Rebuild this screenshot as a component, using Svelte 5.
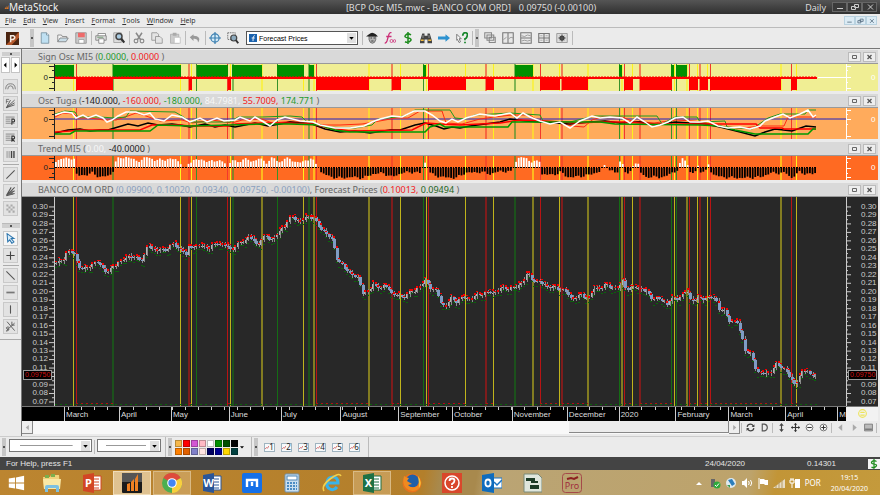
<script lang="ts">
    const menus = ['File', 'Edit', 'View', 'Insert', 'Format', 'Tools', 'Window', 'Help'];

    // inner markup of the 16x16 toolbar icons
    const icons: Record<string, string> = {
        new: '<path d="M3 1h7l3 3v11H3z" fill="#bfe0f2" stroke="#6c8797"/><path d="M10 1v3h3" fill="#fff" stroke="#6c8797"/>',
        open: '<path d="M1 13V4h5l1 2h6v2" fill="#f5f5f5" stroke="#777"/><path d="M1 13l3-5h11l-3 5z" fill="#c9dde8" stroke="#777"/>',
        save: '<path d="M1 1h14v14H1z" fill="#c9c9c9" stroke="#888"/><path d="M4 1h9v6H4z" fill="#ee6a6a"/><path d="M5 10h7v5H5z" fill="#fff" stroke="#999"/>',
        print: '<path d="M4 6V2h10v4" fill="#fff" stroke="#777"/><path d="M1 5h14v6H1z" fill="#ddd" stroke="#777"/><path d="M5 9h7v6H5z" fill="#fff" stroke="#777"/><path d="M3 7h8" stroke="#558a5a"/>',
        preview: '<path d="M1 1h10v13H1z" fill="#ddd" stroke="#999"/><circle cx="8" cy="6" r="4" fill="#a9cbe2" stroke="#444" stroke-width="2"/><path d="M11 9l4 5" stroke="#333" stroke-width="3"/>',
        cut: '<path d="M4 1l6 9M12 1L6 10" stroke="#888" stroke-width="2"/><circle cx="4" cy="12" r="2.5" fill="none" stroke="#888" stroke-width="1.5"/><circle cx="12" cy="12" r="2.5" fill="none" stroke="#888" stroke-width="1.5"/>',
        copy: '<path d="M1 1h7l2 2v8H1z" fill="#e4e4e4" stroke="#8a8a8a"/><path d="M6 6h6l3 3v6H6z" fill="#e4e4e4" stroke="#8a8a8a"/>',
        paste: '<path d="M2 3h11v12H2z" fill="#ccc" stroke="#aaa"/><path d="M5 1h5v4H5z" fill="#aaa"/><path d="M7 7h8v8H7z" fill="#fff" stroke="#bbb"/>',
        undo: '<path d="M6 3L1 7l5 5V9c4 0 6 1 6 5 4-5 1-9-6-9z" fill="#999"/>',
        target: '<circle cx="8" cy="8" r="5.5" fill="#d6ecf8" stroke="#3b7fb0" stroke-width="1.6"/><path d="M8 0v16M0 8h16" stroke="#3b7fb0" stroke-width="1.6"/>',
        zoomsel: '<path d="M1 1h10v9H1z" fill="none" stroke="#555" stroke-dasharray="2 1"/><circle cx="9" cy="8" r="4" fill="#8ba9bd" stroke="#444" stroke-width="1.6"/><path d="M12 11l3 4" stroke="#333" stroke-width="2.6"/>',
        expert: '<path d="M4 5h9v5q-1 5-4.500 5T4 10z" fill="#b3b3b3" stroke="#555"/><path d="M0 6l4-3q4-4 9 0l3 3z" fill="#222"/><path d="M6 8h2M10 8h2M7 12h3" stroke="#222"/>',
        fx: '<path d="M10 1Q7 0 6 5L4 12q-1 3-3 3M3 6h7" fill="none" stroke="#cc2f78" stroke-width="1.7"/><circle cx="10" cy="12" r="2" fill="none" stroke="#cc2f78"/><circle cx="14" cy="12" r="1.800" fill="none" stroke="#cc2f78"/>',
        dollar: '<path d="M12 4Q8 1 5 4t3 4 3 4-7 1M8 0v16" fill="none" stroke="#1d8c1d" stroke-width="2"/>',
        find: '<path d="M3 2h3v3h4V2h3l3 10v3h-6v-5H6v5H0v-3z" fill="#444"/><path d="M1 11h4M11 11h4" stroke="#f0b93c" stroke-width="2"/><path d="M4 4v4M12 4v4" stroke="#aaa"/>',
        arrow: '<path d="M0 6h10V3l6 5-6 5v-3H0z" fill="#2d92d0"/>',
        help: '<path d="M1 3l6 6H4l2 4-2 1-2-4-1 1z" fill="#fff" stroke="#555"/><path d="M9 5q0-4 3.500-4T15 5t-3 4v2M12 13v2" fill="none" stroke="#17862c" stroke-width="2.300"/>',
        cascade: '<path d="M1 1h9v7H1zM4 4h9v7H4zM7 7h8v7H7z" fill="#e8e8e8" stroke="#888" stroke-width="1.4"/>',
        tilev: '<path d="M1 1h14v14H1zM8 1v14" fill="#e8e8e8" stroke="#777" stroke-width="1.400"/><path d="M2 10l4-3M9 9l3-2 3 1" stroke="#888" fill="none"/>',
        tileh: '<path d="M1 1h14v14H1zM1 8h14" fill="#e8e8e8" stroke="#777" stroke-width="1.400"/><path d="M2 5l4 1 4-2 4 1M2 12l4-1 4 1 4-1" stroke="#888" fill="none"/>',
        grid: '<path d="M1 2h14v12H1zM8 2v12M1 8h14" fill="#e8e8e8" stroke="#777" stroke-width="1.500"/><path d="M3 5h3M10 5h3M3 11h3M10 11h3" stroke="#999"/>',
        gear: '<path d="M1 2h14v12H1z" fill="#ddd" stroke="#888"/><circle cx="8" cy="8" r="2.500" fill="none" stroke="#444" stroke-width="2"/><path d="M8 3v10M3 8h10M5 5l6 6M11 5l-6 6" stroke="#444"/>',
        arc: '<path d="M1 12Q1 4 8 4t7 8M4 12q0-5 4-5t4 5" fill="none" stroke="#777" stroke-width="1.300"/>',
        fan: '<path d="M2 14L14 3M2 14L8 3M2 14l12-4M2 14l12-7" stroke="#555" stroke-width="1.300"/><path d="M2 2h4M2 2v6M2 5h3" stroke="#555" fill="none"/>',
        fibp: '<path d="M1 3h13M1 6h7M1 9h7M1 12h13" stroke="#666"/><path d="M10 14V6h3q2 3 0 4h-3" fill="none" stroke="#333" stroke-width="1.500"/>',
        fibr: '<path d="M1 3h13M1 6h7M1 9h7M1 12h13" stroke="#666"/><path d="M10 14V6h3q2 3 0 4h-3l4 4" fill="none" stroke="#333" stroke-width="1.500"/>',
        bars: '<path d="M3 3v10M6 3v10" stroke="#777"/><path d="M9.500 3v10M13 3v10" stroke="#444" stroke-width="2"/>',
        slash: '<path d="M2 14L14 2" stroke="#555" stroke-width="1.500"/>',
        rays: '<path d="M2 14L14 2M2 14L9 2M2 14l12-7M2 14l12-3" stroke="#555" stroke-width="1.500"/><path d="M3 13l8-7v7z" fill="#666"/>',
        check: '<path d="M2 2h3v3H2zM8 2h3v3H8zM5 5h3v3H5zM11 5h3v3h-3zM2 8h3v3H2zM8 8h3v3H8zM5 11h3v3H5zM11 11h3v3h-3z" fill="#aaa"/>',
        pointer: '<path d="M3 1l10 7H9l4 5-3 2-3-5-3 3z" fill="#d9ecf8" stroke="#2e76ae" stroke-width="1.500"/>',
        plus: '<path d="M8 2v12M2 8h12" stroke="#444" stroke-width="1.600"/>',
        back: '<path d="M2 2l12 12" stroke="#555" stroke-width="1.500"/>',
        dash: '<path d="M2 8h12" stroke="#777" stroke-width="2.500"/>',
        pipe: '<path d="M8 2v12" stroke="#555" stroke-width="1.600"/>',
        sl: '<path d="M3 1l11 13M2 14L14 3M10 1v5h4M6 9Q2 8 2 10t3 2-3 3" fill="none" stroke="#555" stroke-width="1.300"/>',
        refresh: '<path d="M2 7q1-5 6-5 3 0 5 3M14 9q-1 5-6 5-3 0-5-3" fill="none" stroke="#444" stroke-width="2.200"/><path d="M15 2v5h-5zM1 14V9h5z" fill="#444"/>',
        day: '<path d="M4 2h4q5 1 5 6t-5 6H4z" fill="none" stroke="#555" stroke-width="2"/>',
        updown: '<path d="M8 0l4 5H9v6h3l-4 5-4-5h3V5H4z" fill="#444"/>',
        move: '<path d="M8 1v14M1 8h14" stroke="#333" stroke-width="2"/><path d="M8 0l3 3H5zM8 16l3-3H5zM0 8l3-3v6zM16 8l-3-3v6z" fill="#333"/>',
        minus: '<circle cx="8" cy="8" r="6" fill="#fff" stroke="#555" stroke-width="1.400"/><path d="M4 8h8" stroke="#333" stroke-width="2"/>',
        zoomin: '<circle cx="8" cy="8" r="6" fill="#fff" stroke="#555" stroke-width="1.400"/><path d="M4 8h8M8 4v8" stroke="#333" stroke-width="2"/>',
        left: '<path d="M11 2v12L4 8z" fill="#aaa"/>',
        right: '<path d="M5 2v12l7-6z" fill="#aaa"/>',
        sheet: '<path d="M1 2h14v12H1z" fill="#bbb" stroke="#777" stroke-width="1.500"/><path d="M2 11h12" stroke="#666" stroke-width="2"/>',
    };

    const toolGroups = [
        ['new', 'open', 'save'],
        ['print', 'preview'],
        ['cut', 'copy', 'paste'],
        ['undo'],
        ['target', 'zoomsel'],
    ];
    const helpTools = ['expert', 'fx', 'dollar', 'find', 'arrow', 'help'];
    const windowTools = ['cascade', 'tilev', 'tileh', 'grid', 'gear'];
    const lineTools = [
        ['arc', 'fan', 'fibp', 'fibr', 'bars'],
        ['slash', 'rays', 'check'],
    ];
    const drawTools = [
        ['pointer', 'plus'],
        ['back', 'dash', 'pipe', 'sl'],
    ];
    const scrollTools = [
        ['refresh', 'day'],
        ['updown', 'move', 'minus', 'zoomin'],
        ['left', 'right', 'sheet'],
    ];

    const swatches = [
        '#f5b84c', '#ff0000', '#d357d3', '#ffb9c4', '#ffffff', '#009000', '#005000', '#000000',
        '#ff8000', '#e06000', '#8080c8', '#ffe4e1', '#000060', '#000090', '#ffd700', '#004040',
    ];

    // signal lines: lower case is a thin line, upper case a wide dim one
    const signals: [number, string][] = [
        [73, 'y'], [76, 'r'], [112, 'G'], [180, 'y'], [188, 'R'], [191, 'y'], [196, 'g'], [227, 'r'],
        [230, 'y'], [232, 'G'], [261, 'Y'], [277, 'g'], [303, 'y'], [308, 'G'], [313, 'Y'], [316, 'r'],
        [368, 'Y'], [391, 'R'], [400, 'y'], [423, 'g'], [426, 'y'], [428, 'r'], [465, 'y'], [485, 'R'],
        [493, 'y'], [514, 'G'], [532, 'Y'], [540, 'r'], [559, 'y'], [561, 'R'], [587, 'Y'], [619, 'g'],
        [621, 'Y'], [624, 'r'], [632, 'y'], [639, 'R'], [671, 'g'], [674, 'y'], [676, 'g'], [686, 'Y'],
        [689, 'r'], [697, 'y'], [699, 'R'], [707, 'y'], [710, 'r'], [780, 'Y'], [791, 'r'], [796, 'y'],
    ];

    const buys = [
        [55, 74], [113, 181], [197, 228], [232, 262], [277, 304], [309, 314],
        [423, 426], [515, 533], [619, 622], [671, 674], [676, 687],
    ];
    const sells = [
        [76, 113], [189, 192], [228, 231], [316, 369], [392, 401], [428, 466], [486, 494], [540, 560],
        [562, 588], [624, 633], [640, 672], [689, 698], [700, 708], [710, 781], [791, 797],
    ];

    // trend histogram, positive is up
    const trend = [
        [55, 5], [60, 9], [65, 8], [70, 9], [74, 8], [75, 0], [76, -8], [84, -7], [92, -5], [98, -9], [108, -8],
        [112, -4], [113, 3], [118, 9], [126, 10], [134, 7], [140, 6], [147, 11], [154, 6], [160, 8], [168, 7],
        [174, 9], [178, 5], [183, 0], [186, 0], [188, 5], [200, 8], [207, 5], [216, 7], [224, 4], [227, 0],
        [231, 8], [237, 4], [243, 9], [251, 5], [258, 9], [265, 4], [272, 10], [278, 4], [284, 9], [291, 7],
        [298, 4], [304, 6], [310, 9], [314, 4], [317, 0], [321, -5], [330, -9], [340, -10], [352, -9],
        [362, -10], [372, -6], [382, -5], [391, -9], [401, -5], [410, -4], [420, -5], [422, 0], [425, 6],
        [427, 0], [430, -6], [440, -9], [455, -10], [464, -5], [480, -4], [490, -6], [500, -3], [511, -4],
        [513, 0], [516, 8], [520, 10], [526, 8], [532, 5], [539, 6], [541, -6], [552, -7], [560, -4],
        [566, -9], [574, -9], [588, -7], [600, -3], [602, 2], [606, 0], [611, -3], [616, -6], [618, 0],
        [620, 9], [623, 0], [626, -8], [630, -3], [633, 4], [637, 4], [639, -4], [645, -9], [664, -9],
        [672, -4], [678, -2], [680, 7], [683, 10], [686, 4], [690, -6], [696, -3], [698, 4], [700, -4],
        [706, -3], [708, 4], [711, -6], [720, -9], [740, -10], [760, -9], [770, -5], [785, -5], [791, -10],
        [798, -4], [806, -6], [812, -6], [817, -4],
    ];

    const price = [
        [55, 66], [62, 64], [64, 57], [70, 56], [74, 57], [77, 70], [82, 73], [90, 68], [98, 66], [104, 74],
        [108, 76], [112, 69], [120, 65], [128, 59], [135, 62], [142, 63], [146, 50], [155, 53], [163, 54],
        [172, 47], [176, 52], [182, 53], [185, 59], [188, 50], [198, 49], [208, 51], [218, 46], [226, 50],
        [230, 54], [234, 49], [241, 46], [248, 39], [256, 49], [262, 40], [270, 43], [278, 36], [283, 29],
        [290, 20], [296, 24], [303, 22], [312, 19], [317, 30], [325, 36], [331, 44], [336, 62], [344, 73], [352, 78],
        [358, 84], [361, 96], [368, 95], [372, 88], [380, 91], [387, 90], [392, 99], [402, 100], [412, 95],
        [420, 89], [425, 84], [430, 92], [436, 96], [440, 106], [444, 111], [450, 102], [456, 105],
        [462, 101], [470, 102], [480, 97], [492, 96], [500, 92], [515, 91], [521, 85], [526, 78], [532, 83],
        [540, 87], [550, 91], [561, 92], [570, 102], [580, 99], [588, 101], [592, 93], [605, 89], [618, 92],
        [622, 84], [626, 93], [635, 90], [644, 95], [652, 102], [663, 104], [666, 108], [670, 103],
        [680, 100], [686, 94], [690, 104], [700, 102], [714, 101], [718, 112], [724, 116], [728, 124],
        [736, 126], [741, 141], [745, 158], [748, 156], [752, 164], [756, 176], [762, 178], [770, 175],
        [776, 168], [784, 173], [790, 184], [794, 188], [800, 178], [806, 173], [810, 180], [817, 180],
    ];

    const oscLines = [
        { color: '#2020c0', width: 1, points: '55,11 846,11' },
        { color: '#ff2a12', width: 1, points: '55,9 63,5 74,6 78,10 90,10 104,12 116,12 128,8 136,5 146,8 160,13 182,12 192,15 212,12 232,15 242,12 262,11 272,15 296,13 310,15 324,17 340,17 362,16 374,14 396,10 408,10 420,3 442,3 446,15 462,16 480,11 494,9 512,7 530,7 540,14 560,15 572,18 584,19 592,12 602,9 622,9 632,13 654,15 676,12 692,13 702,14 722,19 744,20 760,18 784,18 788,9 816,9' },
        { color: '#1f9a1f', width: 1, points: '55,6 65,3 75,4 78,9 100,9 115,10 126,9 130,3 175,4 182,8 190,14 230,14 238,9 262,9 290,8 302,9 306,13 325,19 355,20 372,17 378,11 405,8 415,2 450,2 455,10 465,11 475,7 510,5 540,7 543,13 570,14 590,9 595,8 657,8 662,16 675,9 697,9 700,14 725,13 727,19 752,21 768,10 780,6 805,6 808,2 816,2' },
        { color: '#000000', width: 1.5, points: '55,25 68,22 80,21 90,23 100,22 108,22 118,19 128,16 138,18 148,15 158,17 172,16 180,17 190,19 205,16 215,19 225,17 235,19 245,17 255,15 268,18 280,16 290,14 312,16 325,21 340,24 355,23 370,25 390,22 400,22 415,17 425,15 436,18 444,21 452,19 460,20 470,18 485,16 500,14 510,11 525,13 540,14 555,15 570,16 590,14 605,13 620,15 640,14 655,17 675,14 690,15 705,16 720,19 740,24 755,28 765,24 775,21 792,23 806,18 816,19' },
        { color: '#ff0000', width: 1.5, points: '55,24 70,23 80,22 140,22 152,17 180,17 190,18 228,18 236,16 262,15 290,15 312,16 330,20 350,23 412,22 426,15 440,16 460,17 480,16 500,15 520,12 545,13 575,15 600,14 625,14 656,16 700,16 756,16 760,20 782,20 784,21 816,21' },
        { color: '#009a00', width: 1.5, points: '55,26 70,26 75,23 150,23 158,17 190,18 230,17 262,16 290,16 320,17 335,22 350,24 425,24 430,19 440,16 445,19 508,19 512,14 600,14 615,16 700,17 720,18 735,22 755,26 808,26 813,21 816,21' },
        { color: '#ffffff', width: 1.5, points: '55,7 64,4 72,5 76,10 83,7 88,10 96,7 103,10 107,14 112,12 118,8 126,4 136,4 144,7 150,5 155,11 164,13 172,7 182,9 190,14 200,10 207,14 217,10 224,13 235,12 240,9 250,13 255,9 262,13 270,18 277,12 285,9 300,13 313,14 320,17 335,20 350,20 364,18 372,14 380,11 392,8 402,9 414,3 425,3 432,7 440,13 446,15 452,11 458,14 466,10 480,6 495,8 510,5 517,10 523,5 530,9 540,13 550,16 560,14 570,20 580,13 592,8 600,10 610,9 622,10 630,15 637,9 645,14 652,19 660,17 668,14 675,10 683,9 690,14 700,14 708,13 718,18 728,20 740,19 750,21 760,18 765,13 775,9 783,6 790,10 800,6 808,2 813,9 816,7' },
    ];

    const months: [string, number][] = [
        ['March', 55], ['April', 52], ['May', 58], ['June', 52], ['July', 60], ['August', 58],
        ['September', 54], ['October', 60], ['November', 55], ['December', 52], ['2020', 57],
        ['February', 53], ['March', 57], ['April', 52], ['M', 7],
    ];
    const weeks = Array.from({ length: 60 }, (_, i) => Math.round(67.7 + i * 13.04));
    const lastPrice = '0.09750';
    const priceLabels = Array.from({ length: 24 }, (_, i) => (0.3 - i * 0.01).toFixed(2));
    const priceTicks = Array.from({ length: 47 }, (_, i) => ({ y: 10 + i * 4.26, major: i % 2 === 0 }));

    // the price tag takes the place of the label nearest to the last price
    const tagLabel = Number(lastPrice).toFixed(2);

    function valueAt(points: number[][], x: number) {
        for (let i = 1; i < points.length; i++) {
            const [x0, y0] = points[i - 1];
            const [x1, y1] = points[i];
            if (x <= x1) return y0 + ((y1 - y0) * (x - x0)) / (x1 - x0);
        }
        return points[points.length - 1][1];
    }

    const noise = (i: number) => Math.sin(i * 12.9) * Math.cos(i * 4.7);

    const days = Array.from({ length: 293 }, (_, i) => 55 + i * 2.6);

    const trendBars = days.map((x, i) => {
        const v = valueAt(trend, x);
        return { x, v: Math.abs(v) < 1 ? 0 : v + noise(i) * 1.5 };
    });

    const candles = days.map((x, i) => {
        const open = valueAt(price, Math.max(x - 2.6, 55)) + noise(i) * 2;
        const close = valueAt(price, x) + noise(i + 1) * 2;
        const top = Math.min(open, close);
        return { x, top, height: Math.max(Math.abs(close - open), 1), down: close > open + 1, wick: 1 + Math.abs(noise(i + 3)) * 2 };
    });

    const taskApps = ['explorer', 'powerpoint', 'metastock', 'chrome', 'word', 'maxthon', 'calculator', 'ie', 'excel', 'firefox', 'support', 'outlook', 'broker', 'pro'];
    const openApps = ['chrome', 'excel'];
</script>

{#snippet icon(name: string)}
    <svg class="icon" viewBox="0 0 16 16" fill="none">{@html icons[name]}</svg>
{/snippet}

{#snippet office(letter: string, color: string)}
    <svg viewBox="0 0 20 20">
        <path d="M10 3h9v14h-9z" fill="#fff" stroke={color} />
        <path d="M11 6h6M11 9h6M11 12h6M11 15h6" stroke={color} />
        <path d="M1 2l11-2v20L1 18z" fill={color} />
        <text x="6.5" y="14" font-size="11" font-weight="700" fill="#fff" text-anchor="middle">{letter}</text>
    </svg>
{/snippet}

{#snippet panelButtons()}
    <div class="panel-buttons">
        <button aria-label="Maximize panel"><svg viewBox="0 0 11 8"><path d="M3.500 2.500h4v3h-4z" fill="none" stroke="#666" /></svg></button>
        <button aria-label="Close panel"><svg viewBox="0 0 11 8"><path d="M3.500 2l4 4M7.500 2l-4 4" stroke="#555" stroke-width="1.300" /></svg></button>
    </div>
{/snippet}

{#snippet signalLines(height: number)}
    {#each signals as [x, kind]}
        <rect class="line-{kind.toLowerCase()}" class:dim={kind === kind.toUpperCase()} {x} y="0" width={kind === kind.toUpperCase() ? 2 : 1} {height} />
    {/each}
{/snippet}

{#snippet zeroAxis(height: number, zero: number, side: string)}
    <div class="axis {side}">
        <svg class="scale" viewBox="0 0 6 {height}" preserveAspectRatio="none">
            {#if side === 'left'}
                <path d="M5.500 0V{height}M0 2.500h5M3 6.500h2M0 {zero}h5M3 {zero + 5}h2M0 {height - 2.5}h5" />
            {:else}
                <path d="M.5 0V{height}M0 2.500h5M0 6.500h2M0 {zero}h5M0 {zero + 5}h2M0 {height - 2.5}h5" />
            {/if}
        </svg>
        <span>0</span>
    </div>
{/snippet}

{#snippet priceAxis(side: string)}
    <div class="axis {side}">
        <svg class="scale" viewBox="0 0 6 210" preserveAspectRatio="none">
            <path d={side === 'left' ? 'M5.500 0V210' : 'M.5 0V210'} />
            {#each priceTicks as t}
                <path d={side === 'left' ? `M${t.major ? 0 : 3} ${t.y}H5` : `M0 ${t.y}h${t.major ? 5 : 2}`} />
            {/each}
        </svg>
        <div class="prices">
            {#each priceLabels as label}
                <span>{label === tagLabel ? '' : label}</span>
            {/each}
        </div>
        <div class="price-tag">{lastPrice}</div>
    </div>
{/snippet}

<div class="window">
    <header class="title-bar">
        <div class="brand">
            <svg viewBox="0 0 10 10"><path d="M1 9L5 3v6zM5 9l4-8v8z" fill="#d8772a" /></svg>
            <span>MetaStock</span>
        </div>
        <div class="document">
            <span>[BCP Osc MI5.mwc - BANCO COM ORD]</span>
            <span>0.09750 (-0.00100)</span>
        </div>
        <div class="title-right">
            <span>Daily</span>
            <div class="window-buttons">
                <button aria-label="Minimize"><svg viewBox="0 0 12 8"><path d="M3 5.500h6" /></svg></button>
                <button aria-label="Restore"><svg viewBox="0 0 12 8"><path d="M5.500 1.500h4v3h-4zM2.500 3.500h4v3h-4z" /></svg></button>
                <button aria-label="Close"><svg viewBox="0 0 12 8"><path d="M4 1.500l5 5M9 1.500l-5 5" /></svg></button>
            </div>
        </div>
    </header>

    <nav class="menu-bar">
        {#each menus as menu}
            <button><u>{menu[0]}</u>{menu.slice(1)}</button>
        {/each}
        <div class="window-buttons light">
            <button aria-label="Minimize chart"><svg viewBox="0 0 12 8"><path d="M3 5.500h6" /></svg></button>
            <button aria-label="Restore chart"><svg viewBox="0 0 12 8"><path d="M5.500 1.500h4v3h-4zM2.500 3.500h4v3h-4z" /></svg></button>
            <button aria-label="Close chart"><svg viewBox="0 0 12 8"><path d="M4 1.500l5 5M9 1.500l-5 5" /></svg></button>
        </div>
    </nav>

    <div class="toolbar">
        <button class="power" aria-label="Power Console">
            <svg viewBox="0 0 14 14">
                <rect width="14" height="14" fill="#4a2410" />
                <path d="M0 14L14 0v6L6 14z" fill="#b4572a" />
                <path d="M5 11V4h3q3 2 0 4H5" fill="none" stroke="#f4e9e0" stroke-width="1.600" />
            </svg>
        </button>
        <span class="handle"></span>
        {#each toolGroups as group, i}
            {#if i > 0}<span class="sep"></span>{/if}
            {#each group as name}
                <button class="tool" aria-label={name}>{@render icon(name)}</button>
            {/each}
        {/each}
        <div class="picker">
            <svg class="picker-icon" viewBox="0 0 9 9"><rect width="9" height="9" fill="#1b62ad" /><path d="M6.500 2Q4.500 1 4.500 8M3 4.500h3.500" stroke="#fff" fill="none" /></svg>
            <select aria-label="Indicator">
                <option>Forecast Prices</option>
            </select>
            <svg class="drop" viewBox="0 0 10 10"><path d="M2.500 4h5L5 7z" fill="#000" /></svg>
        </div>
        <span class="sep"></span>
        {#each helpTools as name}
            <button class="tool" aria-label={name}>{@render icon(name)}</button>
        {/each}
        <span class="sep"></span>
        <span class="handle"></span>
        {#each windowTools as name}
            <button class="tool" aria-label={name}>{@render icon(name)}</button>
        {/each}
        <span class="sep"></span>
    </div>

    <div class="workspace">
        <aside class="side-bar">
            <span class="grip"></span>
            <div class="pager">
                <button aria-label="Previous tools"><svg viewBox="0 0 8 16"><path d="M5 5v6L2 8z" /></svg></button>
                <button aria-label="Next tools"><svg viewBox="0 0 8 16"><path d="M3 5v6l3-3z" /></svg></button>
            </div>
            {#each lineTools as group, i}
                {#if i > 0}<hr />{/if}
                {#each group as name}
                    <button class="side-tool" aria-label={name}>{@render icon(name)}</button>
                {/each}
            {/each}
            <span class="grip second"></span>
            {#each drawTools as group, i}
                {#if i > 0}<hr />{/if}
                {#each group as name}
                    <button class="side-tool" class:active={name === 'pointer'} aria-label={name}>{@render icon(name)}</button>
                {/each}
            {/each}
            <hr class="end" />
        </aside>

        <main class="charts">
            <div class="panel-head">
                <p>Sign Osc MI5 (<b class="green">0.0000,</b> <b class="red">0.0000</b> )</p>
                {@render panelButtons()}
            </div>
            <section class="panel sign">
                {@render zeroAxis(27, 13.5, 'left')}
                <svg class="plot" viewBox="55 0 791 27" preserveAspectRatio="none">
                    {@render signalLines(27)}
                    {#each buys as [from, to]}
                        <rect x={from} y="1" width={to - from} height="12" fill="#009000" />
                    {/each}
                    {#each sells as [from, to]}
                        <rect x={from} y="14" width={to - from} height="12" fill="#ff0000" />
                    {/each}
                    <rect x="55" y="13" width="762" height="2" fill="#ff0000" />
                    <path d="M55 12.500H817" stroke="#ff0000" stroke-dasharray="2 1" opacity="0.500" />
                    <path d="M818 13.500H846" stroke="#fff" />
                </svg>
                {@render zeroAxis(27, 13.5, 'right')}
            </section>

            <div class="panel-head">
                <p>Osc Tuga (<b>-140.000,</b> <b class="red">-160.000,</b> <b class="green">-180.000,</b> <b class="white">84.7981,</b> <b class="red">55.7009,</b> <b class="green">174.771</b> )</p>
                {@render panelButtons()}
            </div>
            <section class="panel osc">
                {@render zeroAxis(31, 11.5, 'left')}
                <svg class="plot" viewBox="55 0 791 31" preserveAspectRatio="none">
                    {@render signalLines(31)}
                    {#each oscLines as line}
                        <polyline points={line.points} fill="none" stroke={line.color} stroke-width={line.width} />
                    {/each}
                </svg>
                {@render zeroAxis(31, 11.5, 'right')}
            </section>

            <div class="panel-head">
                <p>Trend MI5 (<b class="white">0.00,</b> <b>-40.0000</b> )</p>
                {@render panelButtons()}
            </div>
            <section class="panel trend">
                {@render zeroAxis(24, 12.5, 'left')}
                <svg class="plot" viewBox="55 0 791 24" preserveAspectRatio="none">
                    {@render signalLines(24)}
                    {#each trendBars as bar}
                        {#if bar.v > 0}
                            <rect class="bar" x={bar.x} y={11 - bar.v} width="1.8" height={bar.v} fill="#fff" />
                        {:else}
                            <rect class="bar" x={bar.x} y="12" width="1.8" height={-bar.v} fill="#000" />
                        {/if}
                    {/each}
                    <path d="M55 11.500H817" stroke="#000" stroke-dasharray="1.600 1" />
                </svg>
                {@render zeroAxis(24, 12.5, 'right')}
            </section>

            <div class="panel-head">
                <p>BANCO COM ORD <b class="blue">(0.09900, 0.10020, 0.09340, 0.09750, -0.00100)</b>, Forecast Prices (<b class="red">0.10013,</b> <b class="dark-green">0.09494</b> )</p>
                {@render panelButtons()}
            </div>
            <section class="panel price">
                {@render priceAxis('left')}
                <svg class="plot" viewBox="55 0 791 210" preserveAspectRatio="none">
                    {@render signalLines(210)}
                    {#each candles as c, i}
                        <rect x={c.x + 1} y={c.top - c.wick} width="1" height={c.height + c.wick * 2} fill="#8c8c8c" />
                        {#if c.down}
                            <rect x={c.x} y={c.top} width="3" height={c.height} fill="#7f9cc4" />
                        {:else}
                            <rect x={c.x} y={c.top} width="1" height={c.height} fill="#b4b4b4" />
                        {/if}
                        <rect x={c.x} y={c.top + c.height + 3 + noise(i) * 2} width="2" height="1" fill="#0a640a" />
                        <rect x={c.x} y={c.top - 2 + noise(i + 5) * 2} width="2" height="1.500" fill="#f00000" />
                    {/each}
                    <path d="M55 208.500H817" stroke="#0a640a" stroke-dasharray="2 3" />
                    {#each sells as [from, to]}
                        <path d="M{from} 207.500H{to}" stroke="#b01010" stroke-dasharray="2 3" />
                    {/each}
                </svg>
                {@render priceAxis('right')}
            </section>

            <div class="time-axis">
                <div class="months">
                    <svg class="weeks" viewBox="55 0 791 3" preserveAspectRatio="none">
                        {#each weeks as x}
                            <rect {x} y="0" width="1" height="3" fill="#ccc" />
                        {/each}
                    </svg>
                    {#each months as [name, width]}
                        <span style="flex-grow: {width}">{name}</span>
                    {/each}
                </div>
                <div class="mood">
                    <svg viewBox="0 0 10 10"><circle cx="5" cy="5" r="3.500" fill="none" stroke="#eee45a" /><path d="M3 4h4M3 6.500h4" stroke="#eee45a" /></svg>
                </div>
            </div>

            <div class="scroll-row">
                <button class="scroll-arrow" aria-label="Scroll left">{@render icon('left')}</button>
                <div class="track"><div class="thumb"></div></div>
                <button class="scroll-arrow" aria-label="Scroll right">{@render icon('right')}</button>
                {#each scrollTools as group}
                    <span class="sep"></span>
                    {#each group as name}
                        <button class="nav-tool" aria-label={name}>{@render icon(name)}</button>
                    {/each}
                {/each}
                <span class="sep"></span>
            </div>
        </main>
    </div>

    <div class="style-bar">
        <span class="handle"></span>
        <div class="line-picker">
            <select aria-label="Line style"><option aria-label="Solid"></option></select>
            <svg class="drop" viewBox="0 0 10 10"><path d="M2.500 4h5L5 7z" fill="#000" /></svg>
        </div>
        <span class="sep"></span>
        <div class="line-picker small">
            <select aria-label="Line weight"><option aria-label="Thin"></option></select>
            <svg class="drop" viewBox="0 0 10 10"><path d="M2.500 4h5L5 7z" fill="#000" /></svg>
        </div>
        <span class="sep wide"></span>
        <span class="handle"></span>
        <div class="swatches">
            {#each swatches as color}
                <button aria-label="Colour {color}" style="background: {color}"></button>
            {/each}
        </div>
        <button class="more" aria-label="More colours"><svg viewBox="0 0 10 10"><path d="M2.500 4h5L5 7z" fill="#000" /></svg></button>
        <span class="sep wide"></span>
        <span class="handle"></span>
        <div class="layouts">
            {#each [1, 2, 3, 4, 5, 6] as n}
                <button aria-label="Layout {n}">
                    <svg viewBox="0 0 5 8"><path d="M0 6l2-2 1 1 2-3" fill="none" stroke="#d05050" /></svg>{n}
                </button>
            {/each}
        </div>
        <span class="sep wide"></span>
    </div>

    <footer class="status-bar">
        <span>For Help, press F1</span>
        <span class="status-date">24/04/2020</span>
        <span class="status-value">0.14301</span>
        <span class="status-icon"><svg viewBox="0 0 16 16">{@html icons.dollar}</svg></span>
    </footer>

    <div class="taskbar">
        <button class="start" aria-label="Start">
            <svg viewBox="0 0 20 20"><path d="M2 5l7-1v5.500H2zM10 4l9-2v7.500h-9zM2 10.500h7V16l-7-1zM10 10.500h9V18l-9-2z" fill="#fff" /></svg>
        </button>
        {#each taskApps as app}
            <button class="task" class:open={openApps.includes(app)} class:current={app === 'metastock'} aria-label={app}>
                {#if app === 'explorer'}
                    <svg viewBox="0 0 20 20"><path d="M1 4h7l1-2h8l1 14H2z" fill="#f0d27c" /><path d="M3 2h4v3H3zM9 1h4v3H9z" fill="#7cae4e" /><path d="M1 6h18l-1 10H2z" fill="#f9e8a6" /><path d="M3 19v-5q0-2 2-2h10q2 0 2 2v5h-3v-4H6v4z" fill="#7cc0e2" /></svg>
                {:else if app === 'powerpoint'}
                    {@render office('P', '#d24625')}
                {:else if app === 'metastock'}
                    <svg viewBox="0 0 20 20"><rect width="20" height="20" rx="1" fill="#1b1b1b" /><path d="M0 0h20v9H0z" fill="#555" /><path d="M5 18v-7l3-1v8zM9 18V9l3-3v12zM13 18V6l3-5v17z" fill="#f08022" /></svg>
                {:else if app === 'chrome'}
                    <svg viewBox="0 0 20 20"><circle cx="10" cy="10" r="10" fill="#4caf50" /><path d="M10 10L1.300 5A10 10 0 0 1 18.700 5z" fill="#de4b3c" /><path d="M10 10L18.700 5A10 10 0 0 1 10 20z" fill="#f8cf3e" /><circle cx="10" cy="10" r="4.800" fill="#fff" /><circle cx="10" cy="10" r="3.700" fill="#4285f4" /></svg>
                {:else if app === 'word'}
                    {@render office('W', '#2a5699')}
                {:else if app === 'maxthon'}
                    <svg viewBox="0 0 20 20"><rect width="20" height="20" rx="2" fill="#1570e8" /><path d="M5 14V7h10v7M10 9v4" fill="none" stroke="#fff" stroke-width="2.400" /></svg>
                {:else if app === 'calculator'}
                    <svg viewBox="0 0 20 20"><rect x="3" y="1" width="14" height="18" rx="1" fill="#c9dff0" stroke="#7093b0" /><rect x="5" y="3" width="10" height="4" fill="#fff" stroke="#4f86b4" /><path d="M5 10h10M5 13h10M5 16h10" stroke="#4a8cc4" stroke-width="2" stroke-dasharray="2 1" /></svg>
                {:else if app === 'ie'}
                    <svg viewBox="0 0 20 20"><path d="M15 14Q12 18 8 16T5 9t6-5 5 6H6" fill="none" stroke="#39b4ea" stroke-width="3" /><path d="M2 18Q-1 13 8 6T19 3" fill="none" stroke="#f5cf49" stroke-width="1.600" /></svg>
                {:else if app === 'excel'}
                    {@render office('X', '#1e7145')}
                {:else if app === 'firefox'}
                    <svg viewBox="0 0 20 20"><circle cx="10" cy="10" r="9.500" fill="#e8721c" /><circle cx="10.500" cy="8" r="6.500" fill="#1f5fa8" /><path d="M2 3q-2 8 2 12 5 5 11 2 5-3 4-10-1 6-6 7-5 1-7-2l4-1-5-3 2-3q-3 0-5-2z" fill="#f08a20" /><path d="M16 3q5 6 1 12 0-7-1-12z" fill="#f8c23a" /></svg>
                {:else if app === 'support'}
                    <svg viewBox="0 0 20 20"><rect width="20" height="20" fill="#d9472b" /><circle cx="10" cy="10" r="7" fill="none" stroke="#fff" stroke-width="1.500" /><path d="M7.500 8q0-2.500 2.500-2.500t2.500 2T10 11v1M10 13v2" fill="none" stroke="#fff" stroke-width="1.800" /></svg>
                {:else if app === 'outlook'}
                    <svg viewBox="0 0 20 20"><path d="M10 5h10v10H10z" fill="#fff" stroke="#1a73c2" /><path d="M12 9l3 3 5-5" fill="none" stroke="#1a73c2" stroke-width="1.500" /><path d="M0 2l12-2v20L0 18z" fill="#0f6cbd" /><ellipse cx="6" cy="10" rx="2.600" ry="3.500" fill="none" stroke="#fff" stroke-width="1.800" /></svg>
                {:else if app === 'broker'}
                    <svg viewBox="0 0 20 20"><path d="M2 1h14l4 4v14H2z" fill="#dfe6dc" stroke="#7b8a78" /><path d="M4 5h9v3H4zM9 8h7v2H9zM8 12h9v4H8z" fill="#1d3b26" /></svg>
                {:else}
                    <svg viewBox="0 0 20 20"><rect x=".5" y=".5" width="19" height="19" rx="3" fill="none" stroke="#a54a4a" /><path d="M5 6l4-1 3 1 4-2" stroke="#8c2020" stroke-width="2" fill="none" /><text x="10" y="16" font-size="9" fill="#a02c3c" text-anchor="middle">Pro</text></svg>
                {/if}
            </button>
        {/each}
        <div class="tray">
            <svg viewBox="0 0 12 12"><path d="M3 8l3-3 3 3z" fill="#fff" /></svg>
            <svg viewBox="0 0 12 12"><path d="M2 2h4v8H2z" fill="#666" /><circle cx="8" cy="8" r="3.500" fill="#2faa3c" /><path d="M6 8l1.500 1.500L10 6.500" stroke="#fff" fill="none" /></svg>
            <svg viewBox="0 0 12 12"><circle cx="6" cy="6" r="5" fill="#dfe9ee" /><path d="M3 3l4-1 3 5-3 2-2-3z" fill="#2b7dbb" /><path d="M2 8h3v3z" fill="#3a9b50" /></svg>
            <svg viewBox="0 0 12 12"><path d="M1 4h2l3-3v10L3 8H1z" fill="#fff" /><path d="M7.500 4q1.500 2 0 4M9.500 3q2.500 3 0 6" stroke="#fff" fill="none" /></svg>
            <svg viewBox="0 0 12 12"><path d="M2 1v11" stroke="#fff" /><path d="M3 2h4l1 1h3v5H8L7 7H3z" fill="#fff" /></svg>
            <svg viewBox="0 0 12 12"><path d="M0 11L12 2v9z" fill="#e8dcc4" /><path d="M3 12V8M6 12V5M9 12V3" stroke="#b69a60" /></svg>
            <svg viewBox="0 0 12 12"><path d="M6 2h5v9H6z" fill="#fff" /><path d="M1 3h4v3H1zM3 6v5M2 1v2M4 1v2" stroke="#fff" fill="none" /></svg>
            <span class="language">POR</span>
            <div class="clock"><span>19:15</span><span>20/04/2020</span></div>
        </div>
    </div>
</div>

<style>
    :global(body) {
        margin: 0;
    }

    .window {
        display: flex;
        flex-direction: column;
        height: 100vh;
        min-height: 440px;
        overflow: hidden;
        background: #ebebeb;
        font-family: 'Noto Sans', 'Open Sans', sans-serif;
        font-size: 9px;
        color: #333;
    }

    button {
        display: flex;
        align-items: center;
        justify-content: center;
        margin: 0;
        padding: 0;
        border: none;
        background: none;
        font: inherit;
        color: inherit;
    }

    svg {
        display: block;
    }

    .icon {
        width: 12px;
        height: 12px;
    }

    .title-bar {
        display: grid;
        grid-template-columns: 1fr auto 1fr;
        align-items: center;
        height: 14px;
        flex: none;
        background: linear-gradient(#555, #303030);
        color: #ddd;
        line-height: 12px;
        white-space: nowrap;
    }

    .brand {
        display: flex;
        align-items: center;
        padding-left: 4px;
        font-size: 10px;
        color: #f2f2f2;
    }

    .brand svg {
        width: 5px;
        height: 8px;
    }

    .document {
        display: flex;
        gap: 8px;
        padding: 2px 0 0 62px;
    }

    .title-right {
        display: flex;
        align-items: center;
        justify-content: flex-end;
        gap: 6px;
        padding-right: 3px;
    }

    .title-right > span {
        padding-top: 2px;
    }

    .window-buttons {
        display: flex;
    }

    .window-buttons button {
        width: 15px;
        height: 10px;
        border: 1px solid #666;
        box-sizing: border-box;
        background: #3a3a3a;
    }

    .window-buttons svg {
        width: 12px;
        height: 8px;
        fill: none;
        stroke: #ccc;
    }

    .window-buttons.light {
        margin-left: auto;
    }

    .window-buttons.light button {
        width: 11px;
        height: 9px;
        border-color: #b9d2e0;
        background: #dcebf4;
    }

    .window-buttons.light svg {
        width: 9px;
        stroke: #4c6478;
    }

    .menu-bar {
        display: flex;
        align-items: center;
        gap: 7px;
        height: 13px;
        flex: none;
        padding: 0 3px 0 5px;
        border-bottom: 1px solid #bbb;
        font-size: 7px;
    }

    .toolbar {
        display: flex;
        align-items: center;
        height: 20px;
        flex: none;
        border-bottom: 1px solid #777;
    }

    .toolbar .sep {
        margin-left: 1px;
    }

    .power {
        width: 25px;
        margin-right: 3px;
    }

    .power svg {
        width: 13px;
        height: 13px;
    }

    .handle {
        width: 4px;
        height: 18px;
        margin: 0 2px;
        background: radial-gradient(circle, #555 1px, #c6c6c6 1px);
        flex: none;
    }

    .tool {
        width: 18px;
        height: 18px;
        flex: 0 1 auto;
    }

    .sep {
        width: 1px;
        height: 14px;
        background: #bbb;
        flex: none;
    }

    .picker {
        position: relative;
        width: 112px;
        margin: 0 3px 0 4px;
    }

    .picker select {
        width: 100%;
        height: 14px;
        padding: 0 12px 0 12px;
        border: 1px solid #555;
        border-radius: 0;
        background: #fff;
        appearance: none;
        font-family: 'Liberation Sans', Arial, sans-serif;
        font-size: 7px;
        color: #000;
    }

    .picker-icon {
        position: absolute;
        left: 3px;
        top: 3px;
        width: 8px;
        height: 8px;
    }

    .drop {
        position: absolute;
        right: 2px;
        top: 2px;
        width: 9px;
        height: 10px;
        background: #e0e0e0;
        pointer-events: none;
    }

    .workspace {
        display: flex;
        flex: 1;
        min-height: 0;
    }

    .side-bar {
        display: flex;
        flex-direction: column;
        align-items: center;
        width: 21px;
        flex: none;
        border-right: 1px solid #777;
    }

    .grip {
        width: 18px;
        height: 4px;
        margin-top: 3px;
        background: radial-gradient(circle, #555 1px, #cfcfcf 1px);
        flex: none;
    }

    .grip.second {
        margin: 6px 0 2px;
        border-top: 1px solid #bbb;
    }

    .pager {
        display: flex;
        gap: 1px;
        margin: 1px 0 5px;
    }

    .pager button {
        width: 9px;
        height: 16px;
        border: 1px solid #c4c4c4;
        box-sizing: border-box;
        background: #fff;
    }

    .pager svg {
        width: 8px;
        height: 14px;
    }

    .side-tool {
        width: 13px;
        height: 13px;
        margin: 2px 0;
        box-shadow: 0 0 0 1px #c9c9c9;
        background: #e2e2e2;
        flex: none;
    }

    .side-tool.active {
        background: #f6f6f6;
    }

    .side-tool .icon {
        width: 11px;
        height: 11px;
    }

    hr {
        width: 16px;
        margin: 1px 0;
        border: none;
        border-top: 1px solid #aaa;
    }

    hr.end {
        width: 21px;
        margin-top: 4px;
    }

    .charts {
        display: flex;
        flex-direction: column;
        flex: 1;
        min-width: 0;
        padding: 1px 2px 2px 0;
    }

    .panel-head {
        display: flex;
        align-items: center;
        justify-content: space-between;
        height: 13px;
        flex: none;
        padding: 0 3px 0 16px;
        border-bottom: 1px solid #999;
        background: #d9d9d9;
        color: #666;
        white-space: nowrap;
    }

    .panel-head p {
        margin: 0;
        line-height: 13px;
    }

    .panel-head b {
        font-weight: 400;
        color: #222;
    }

    .panel-head .green {
        color: #1f9a2f;
    }

    .panel-head .dark-green {
        color: #1d641d;
    }

    .panel-head .red {
        color: #f21c1c;
    }

    .panel-head .white {
        color: #f7f7f7;
    }

    .panel-head .blue {
        color: #8aa0be;
    }

    .panel-buttons {
        display: flex;
        gap: 4px;
    }

    .panel-buttons button {
        width: 11px;
        height: 8px;
        background: #eee;
        box-shadow: 0 0 0 1px #bbb;
    }

    .panel-buttons svg {
        width: 11px;
        height: 8px;
    }

    .panel {
        display: grid;
        grid-template-columns: 33px 1fr 32px;
        flex: none;
        margin-bottom: 3px;
    }

    .plot {
        width: 100%;
        height: 100%;
        min-height: 0;
        shape-rendering: crispEdges;
    }

    .osc polyline,
    .bar {
        shape-rendering: auto;
    }

    .panel.sign {
        height: 27px;
        background: #f0ee94;
    }

    .panel.osc {
        height: 31px;
        background: #ffab5c;
    }

    .panel.trend {
        height: 24px;
        background: #ff6a22;
    }

    .panel.price {
        flex: 1;
        min-height: 0;
        margin: 0;
        grid-template-rows: minmax(0, 1fr);
        background: #282828;
    }

    .line-y {
        fill: #fdf21c;
    }

    .line-r {
        fill: #f2382c;
    }

    .line-g {
        fill: #38922a;
    }

    .dim {
        opacity: 0.6;
    }

    .price .line-y {
        fill: #c0b41c;
    }

    .price .line-r {
        fill: #b81414;
    }

    .price .line-g {
        fill: #146c14;
    }

    .axis {
        position: relative;
        display: flex;
        align-items: center;
        min-height: 0;
        font-family: 'Liberation Sans', Arial, sans-serif;
        font-size: 8px;
        line-height: 8px;
        color: #fff;
    }

    .axis.left {
        flex-direction: row-reverse;
        gap: 1px;
    }

    .axis.right {
        gap: 9px;
    }

    .axis.right > span {
        margin-left: 10px;
    }

    .osc .axis > span {
        margin-bottom: 8px;
    }

    .panel:not(.price) .left {
        color: #222;
    }

    .scale {
        width: 6px;
        height: 100%;
        fill: none;
        stroke: currentColor;
        shape-rendering: crispEdges;
        flex: none;
    }

    .price .axis {
        color: #ccc;
    }

    .prices {
        display: flex;
        flex-direction: column;
        justify-content: space-between;
        height: 100%;
        box-sizing: border-box;
        padding-top: 6px;
    }

    .prices span {
        min-height: 8px;
    }

    .price-tag {
        position: absolute;
        top: 83%;
        left: 1px;
        padding: 0 1px;
        border: 1px solid #999;
        background: #000;
        font-size: 7px;
        color: #d01010;
    }

    .right .price-tag {
        left: 2px;
    }

    .time-axis {
        display: flex;
        height: 14px;
        flex: none;
        border-top: 1px solid #777;
        background: #000;
    }

    .months {
        position: relative;
        display: flex;
        flex: 1;
        min-width: 0;
        padding-left: 42px;
        font-family: 'Liberation Sans', Arial, sans-serif;
        font-size: 8px;
        line-height: 15px;
        color: #ddd;
    }

    .months span {
        flex: 1 1 0;
        min-width: 0;
        box-sizing: border-box;
        overflow: hidden;
        border-left: 1px solid #ccc;
        padding-left: 1px;
    }

    .weeks {
        position: absolute;
        top: 0;
        left: 33px;
        width: calc(100% - 33px);
        height: 3px;
    }

    .mood {
        display: flex;
        justify-content: center;
        width: 32px;
        background: #f2f2f2;
    }

    .mood svg {
        width: 11px;
        height: 13px;
    }

    .scroll-row {
        display: flex;
        align-items: center;
        height: 13px;
        flex: none;
    }

    .scroll-arrow {
        width: 11px;
        height: 13px;
        box-sizing: border-box;
        border-right: 1px solid #888;
        border-bottom: 1px solid #888;
        background: #eee;
    }

    .scroll-arrow .icon {
        width: 7px;
        height: 7px;
    }

    .track {
        flex: 1;
        height: 13px;
        background: #f8f8f8;
    }

    .thumb {
        width: 23%;
        height: 12px;
        margin-left: auto;
        border-right: 1px solid #888;
        border-bottom: 1px solid #888;
        box-sizing: border-box;
        background: #ececec;
    }

    .scroll-row .sep {
        height: 10px;
        margin: 0 1px;
    }

    .nav-tool {
        width: 14px;
    }

    .nav-tool .icon {
        width: 9px;
        height: 9px;
    }

    .style-bar {
        display: flex;
        align-items: center;
        height: 20px;
        flex: none;
        border-top: 1px solid #ccc;
    }

    .style-bar .handle {
        margin: 0 3px 0 2px;
    }

    .line-picker {
        position: relative;
        width: 83px;
        margin-right: 2px;
    }

    .line-picker.small {
        width: 64px;
        margin: 0 4px 0 2px;
    }

    .line-picker select {
        width: 100%;
        height: 13px;
        border: 1px solid #777;
        border-radius: 0;
        appearance: none;
        background: linear-gradient(#999, #999) 35% 50% / 65% 1px no-repeat #fff;
    }

    .sep.wide {
        height: 20px;
    }

    .swatches {
        display: grid;
        grid-template-columns: repeat(8, 7px);
        gap: 1px;
        flex: none;
    }

    .swatches button {
        height: 7px;
        box-shadow: inset 0 0 0 1px rgba(0, 0, 0, 0.25);
    }

    .more {
        width: 8px;
        margin-right: 5px;
    }

    .more svg {
        width: 8px;
        height: 8px;
    }

    .layouts {
        display: flex;
        gap: 6px;
        padding: 0 8px 0 3px;
    }

    .layouts button {
        width: 11px;
        height: 9px;
        box-sizing: border-box;
        border: 1px solid #9fb3bf;
        background: #f7fafc;
        font-size: 8px;
        line-height: 8px;
        color: #222;
    }

    .layouts svg {
        width: 4px;
        height: 7px;
    }

    .status-bar {
        display: grid;
        grid-template-columns: 1fr auto auto auto;
        align-items: center;
        height: 13px;
        flex: none;
        padding-left: 6px;
        background: #444;
        font-family: 'Liberation Sans', Arial, sans-serif;
        font-size: 8px;
        line-height: 13px;
        color: #e4e4e4;
    }

    .status-date {
        margin-right: 62px;
    }

    .status-value {
        margin-right: 32px;
    }

    .status-icon {
        background: #f4f4f4;
    }

    .status-icon svg {
        width: 12px;
        height: 10px;
    }

    .taskbar {
        display: flex;
        align-items: center;
        gap: 2px;
        height: 25px;
        flex: none;
        background: linear-gradient(100deg, #bc8530 0%, #b37f2b 48%, #a8894d 50%, #a8894d 54%, #baa474 56%, #bda36b 85%, #c29537 88%, #c49a3c 100%);
    }

    .start {
        width: 31px;
        height: 25px;
    }

    .start svg {
        width: 20px;
        height: 18px;
    }

    .task {
        width: 38px;
        height: 24px;
        box-sizing: border-box;
        flex: 0 1 auto;
    }

    .task svg {
        width: 20px;
        height: 20px;
    }

    .task.open {
        border: 1px solid #d9ba85;
        background: rgba(255, 240, 210, 0.25);
    }

    .task.current {
        border: 1px solid #f0dcb8;
        background: rgba(255, 245, 225, 0.55);
    }

    .tray {
        display: flex;
        align-items: center;
        gap: 4px;
        margin-left: auto;
        padding-right: 12px;
        font-size: 7px;
        line-height: 11px;
        color: #fff;
    }

    .tray svg {
        width: 12px;
        height: 12px;
    }

    .language {
        font-size: 8px;
    }

    .clock {
        display: flex;
        flex-direction: column;
        align-items: center;
        margin-left: 6px;
    }
</style>
